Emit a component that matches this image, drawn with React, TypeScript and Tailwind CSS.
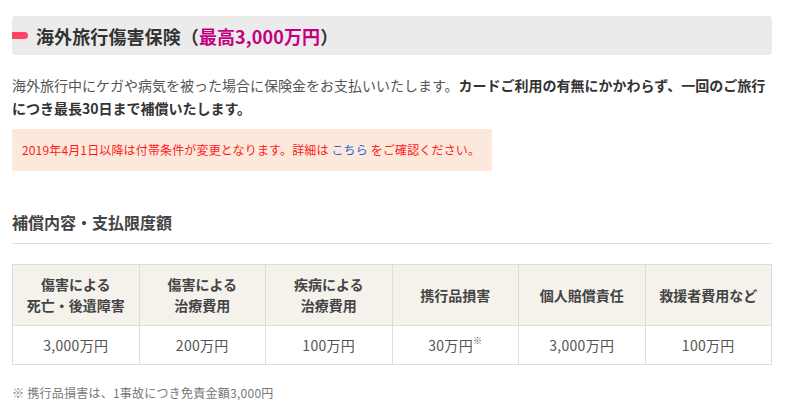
import React from "react";

const font = { fontFamily: '"Noto Sans CJK JP", "Noto Sans", sans-serif' };

const headers = [
  ["傷害による", "死亡・後遺障害"],
  ["傷害による", "治療費用"],
  ["疾病による", "治療費用"],
  ["携行品損害"],
  ["個人賠償責任"],
  ["救援者費用など"],
];

const values: React.ReactNode[] = [
  "3,000万円",
  "200万円",
  "100万円",
  <>
    30万円<span className="text-[9px] align-top leading-none relative top-[1px]">※</span>
  </>,
  "3,000万円",
  "100万円",
];

export default function App() {
  return (
    <div className="w-[789px] h-[414px] bg-white overflow-hidden" style={font}>
      <div className="ml-3 w-[760px] pt-4">
        <div className="h-[39px] bg-[#ebebeb] rounded-[4px] flex items-center">
          <div className="w-4 h-[7px] bg-[#ff4464] rounded-r-full" />
          <h1 className="ml-2 text-[18px] leading-[24px] font-bold text-[#333] tracking-[0.1px]">
            海外旅行傷害保険（<span className="text-[#c5007f]">最高3,000万円</span>）
          </h1>
        </div>

        <p className="mt-[19px] text-[14px] leading-[23px] text-[#555]">
          海外旅行中にケガや病気を被った場合に保険金をお支払いいたします。<span className="font-bold text-[#333]">カードご利用の有無にかかわらず、一回のご旅行につき最長30日まで補償いたします。</span>
        </p>

        <div className="mt-[9px] w-[480px] h-[42px] bg-[#fde8dc] px-[10px] text-[12px] leading-[42px] text-[#ff1a1a] tracking-[0.15px] whitespace-nowrap">
          2019年4月1日以降は付帯条件が変更となります。詳細は <span className="text-[#1a66cc]">こちら</span> をご確認ください。
        </div>

        <h2 className="mt-[39px] text-[16px] leading-[24px] font-bold text-[#444] pb-[9px] border-b border-[#dddddd]">
          補償内容・支払限度額
        </h2>

        <table className="mt-5 w-[760px] border-collapse table-fixed">
          <thead>
            <tr className="h-[61px] bg-[#f5f2ec]">
              {headers.map((h, i) => (
                <th
                  key={i}
                  className="border border-[#dddddd] text-[14px] leading-[21px] font-bold text-[#444] text-center align-middle"
                >
                  {h.map((l, j) => (
                    <div key={j}>{l}</div>
                  ))}
                </th>
              ))}
            </tr>
          </thead>
          <tbody>
            <tr className="h-[39px]">
              {values.map((v, i) => (
                <td
                  key={i}
                  className="border border-[#dddddd] text-[14px] leading-[20px] text-[#555] text-center align-middle tracking-[0.3px]"
                >
                  {v}
                </td>
              ))}
            </tr>
          </tbody>
        </table>

        <p className="mt-[19px] text-[12px] leading-[18px] text-[#777] tracking-[0.25px]">
          ※ 携行品損害は、1事故につき免責金額3,000円
        </p>
      </div>
    </div>
  );
}
